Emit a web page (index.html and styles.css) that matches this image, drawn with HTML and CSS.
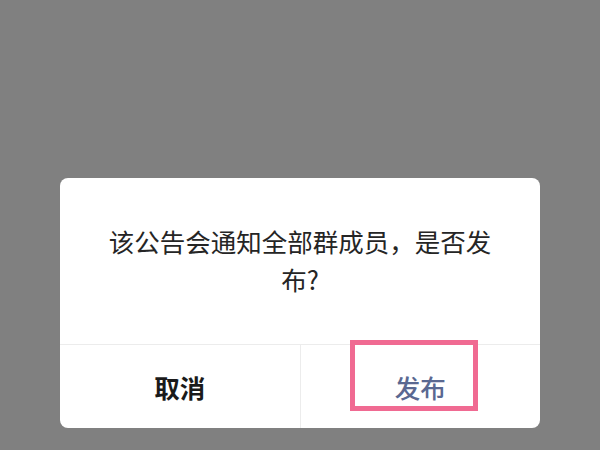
FILE: index.html
```html
<!DOCTYPE html>
<html lang="zh-CN">
<head>
<meta charset="utf-8">
<link rel="stylesheet" href="styles.css">
</head>
<body>
<div class="page">
  <div class="dialog">
    <div class="message">该公告会通知全部群成员，是否发布?</div>
    <div class="actions">
      <div class="btn cancel">取消</div>
      <div class="btn confirm">发布</div>
    </div>
    <div class="highlight"></div>
  </div>
</div>
</body>
</html>
```
FILE: styles.css
```css
html, body {
  margin: 0;
  padding: 0;
  background: #808080;
}
body {
  width: 600px;
  height: 450px;
  overflow: hidden;
  font-family: "Noto Sans CJK SC", "Noto Sans", sans-serif;
}
.page {
  display: flex;
  justify-content: center;
  padding-top: 178px;
}
.dialog {
  position: relative;
  width: 480px;
  height: 250px;
  background: #fff;
  border-radius: 8px;
  display: flex;
  flex-direction: column;
}
.message {
  padding: 44px 40px 46px;
  font-size: 25.5px;
  line-height: 38px;
  color: #252525;
  text-align: center;
}
.actions {
  flex: 1;
  display: flex;
  border-top: 1px solid #ececec;
}
.btn {
  flex: 1;
  display: flex;
  align-items: center;
  justify-content: center;
  font-size: 25.5px;
}
.cancel {
  color: #1a1a1a;
  font-weight: 700;
  border-right: 1px solid #ececec;
}
.confirm {
  color: #5a6891;
  font-weight: 500;
}
.highlight {
  position: absolute;
  left: 290px;
  top: 162px;
  width: 118px;
  height: 61px;
  border: 5px solid #f06a92;
}
```
